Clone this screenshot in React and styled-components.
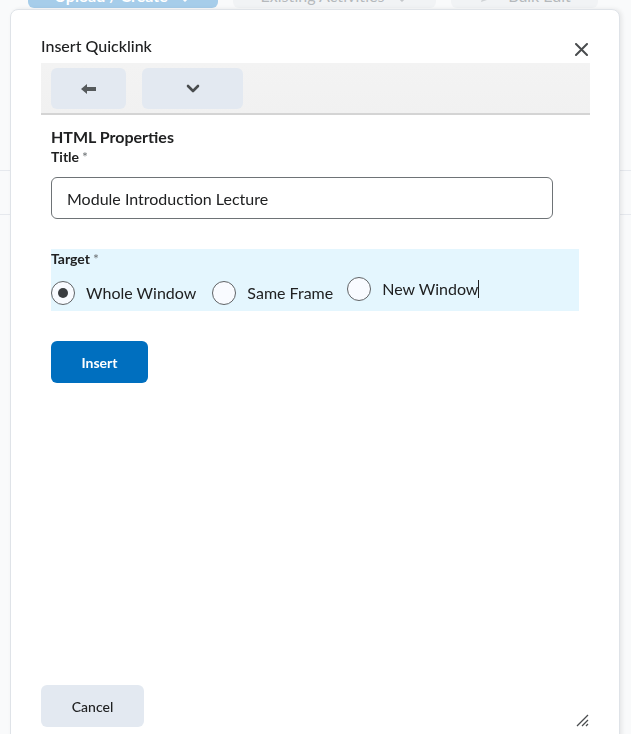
import React from 'react';
import styled, { createGlobalStyle } from 'styled-components';

const GlobalStyle = createGlobalStyle`
    html, body {
        margin: 0;
        padding: 0;
        background: #f9fafb;
        font-family: Lato, "Open Sans", sans-serif;
        color: #202122;
        overflow: hidden;
    }
`;

const Page = styled.div`
    height: 734px;
    background: #f9fafb;
`;

const TopBar = styled.div`
    display: flex;
    gap: 15px;
    padding-left: 28px;
    margin-top: -34px;
`;

const BackButton = styled.div`
    display: flex;
    align-items: flex-end;
    justify-content: center;
    gap: 10px;
    width: ${props => props.width}px;
    height: 42px;
    box-sizing: border-box;
    padding-bottom: 3px;
    border-radius: 6px;
    background: ${props => (props.primary ? '#a6cdea' : '#f1f3f5')};
    color: ${props => (props.primary ? '#ffffff' : '#b5b9bc')};
    font-size: 16px;
    font-weight: ${props => (props.primary ? 700 : 400)};
`;

const BackList = styled.div`
    margin-top: 162px;
`;

const BackRow = styled.div`
    height: 43px;
    border-top: 1px solid #e6e9ee;
`;

const Dialog = styled.div`
    position: fixed;
    top: 9px;
    left: 10px;
    width: 610px;
    height: 740px;
    box-sizing: border-box;
    background: #ffffff;
    border: 1px solid #dfe3e8;
    border-radius: 8px;
    box-shadow: 2px 0 4px rgba(0, 0, 0, 0.08);
    display: flex;
    flex-direction: column;
    padding: 0 29px 0 30px;
`;

const Header = styled.div`
    display: flex;
    align-items: center;
    justify-content: space-between;
    height: 53px;
`;

const DialogTitle = styled.div`
    font-size: 16px;
    font-weight: 500;
    margin-top: 17px;
    color: #202122;
`;

const CloseButton = styled.div`
    display: flex;
    align-items: center;
    justify-content: center;
    width: 24px;
    height: 24px;
    margin-top: 25px;
    margin-right: -3px;
`;

const Toolbar = styled.div`
    display: flex;
    gap: 16px;
    height: 52px;
    box-sizing: border-box;
    padding: 5px 10px 0;
    background: linear-gradient(#f3f3f3, #f1f1f1);
    border-bottom: 2px solid #d4d4d4;
`;

const ToolButton = styled.div`
    display: flex;
    align-items: center;
    justify-content: center;
    width: ${props => props.width}px;
    height: 41px;
    border-radius: 6px;
    background: #e3e9f1;
`;

const Form = styled.div`
    display: flex;
    flex-direction: column;
    padding: 12px 10px 0;
`;

const SectionTitle = styled.div`
    font-size: 16px;
    font-weight: 700;
    line-height: 20px;
`;

const Label = styled.div`
    font-size: 14px;
    font-weight: 700;
    line-height: 18px;
    margin-top: ${props => props.top || 0}px;
    color: #202122;

    span {
        color: #6e7376;
        font-weight: 400;
        margin-left: 3px;
    }
`;

const TextInput = styled.div`
    width: 502px;
    height: 42px;
    box-sizing: border-box;
    margin-top: 11px;
    border: 1px solid #6e7376;
    border-radius: 6px;
    display: flex;
    align-items: center;
    padding-left: 15px;
    font-size: 16px;
    color: #202122;
`;

const TargetPanel = styled.div`
    margin-top: 30px;
    width: 528px;
    height: 62px;
    box-sizing: border-box;
    background: #e4f6fe;
    padding-top: 1px;
`;

const RadioRow = styled.div`
    display: flex;
    align-items: flex-start;
    margin-top: 9px;
`;

const RadioOption = styled.div`
    display: flex;
    align-items: center;
    gap: 11px;
    margin-right: ${props => props.gap}px;
    margin-top: ${props => props.shift || 0}px;
    font-size: 16px;
    color: #202122;
    line-height: 24px;
`;

const RadioCircle = styled.div`
    width: 24px;
    height: 24px;
    box-sizing: border-box;
    border-radius: 50%;
    border: 1px solid #5f6366;
    background: #f9fbff;
    display: flex;
    align-items: center;
    justify-content: center;

    &::after {
        content: '';
        display: ${props => (props.checked ? 'block' : 'none')};
        width: 10px;
        height: 10px;
        border-radius: 50%;
        background: #3a3d40;
    }
`;

const Caret = styled.span`
    display: inline-block;
    width: 1px;
    height: 18px;
    background: #202122;
    vertical-align: -3px;
`;

const PrimaryButton = styled.div`
    margin-top: 30px;
    width: 97px;
    height: 42px;
    border-radius: 6px;
    background: #006fbf;
    color: #ffffff;
    font-size: 14px;
    font-weight: 700;
    display: flex;
    align-items: center;
    justify-content: center;
`;

const Footer = styled.div`
    margin-top: auto;
    padding-bottom: 21px;
`;

const SecondaryButton = styled.div`
    width: 103px;
    height: 42px;
    border-radius: 6px;
    background: #e3e9f1;
    color: #202122;
    font-size: 14px;
    font-weight: 500;
    display: flex;
    align-items: center;
    justify-content: center;
`;

const Grip = styled.svg`
    position: absolute;
    right: 30px;
    top: 704px;
`;

const App = () => (
    <Page>
        <GlobalStyle />
        <TopBar>
            <BackButton primary width={190}>
                Upload / Create
                <svg width="14" height="14" viewBox="0 0 14 14">
                    <path d="M2 4l5 5 5-5" fill="none" stroke="#fff" strokeWidth="3" />
                </svg>
            </BackButton>
            <BackButton width={203}>
                Existing Activities
                <svg width="14" height="14" viewBox="0 0 14 14">
                    <path d="M2 4l5 5 5-5" fill="none" stroke="#c4c7ca" strokeWidth="3" />
                </svg>
            </BackButton>
            <BackButton width={147}>
                <svg width="20" height="20" viewBox="0 0 20 20">
                    <path d="M3 17l2-6L14 2l4 4-9 9z" fill="#d0d3d6" />
                </svg>
                Bulk Edit
            </BackButton>
        </TopBar>
        <BackList>
            <BackRow />
            <BackRow />
        </BackList>

        <Dialog>
            <Header>
                <DialogTitle>Insert Quicklink</DialogTitle>
                <CloseButton>
                    <svg width="13" height="13" viewBox="0 0 13 13">
                        <path d="M1 1l11 11M12 1L1 12" stroke="#494c4e" strokeWidth="2" strokeLinecap="round" />
                    </svg>
                </CloseButton>
            </Header>
            <Toolbar>
                <ToolButton width={75}>
                    <svg width="16" height="12" viewBox="0 0 16 12">
                        <path d="M0 6L6 1v3h9v4H6v3z" fill="#565a5c" />
                    </svg>
                </ToolButton>
                <ToolButton width={101}>
                    <svg width="14" height="10" viewBox="0 0 14 10">
                        <path d="M2 2l5 5 5-5" fill="none" stroke="#494c4e" strokeWidth="2.6" strokeLinecap="round" strokeLinejoin="round" />
                    </svg>
                </ToolButton>
            </Toolbar>
            <Form>
                <SectionTitle>HTML Properties</SectionTitle>
                <Label top={1}>Title<span>*</span></Label>
                <TextInput>Module Introduction Lecture</TextInput>
                <TargetPanel>
                    <Label>Target<span>*</span></Label>
                    <RadioRow>
                        <RadioOption gap={16} shift={4}>
                            <RadioCircle checked />
                            Whole Window
                        </RadioOption>
                        <RadioOption gap={14} shift={4}>
                            <RadioCircle />
                            Same Frame
                        </RadioOption>
                        <RadioOption gap={0} shift={0}>
                            <RadioCircle />
                            <span>New Window<Caret /></span>
                        </RadioOption>
                    </RadioRow>
                </TargetPanel>
                <PrimaryButton>Insert</PrimaryButton>
            </Form>
            <Footer>
                <SecondaryButton>Cancel</SecondaryButton>
            </Footer>
            <Grip width="13" height="13" viewBox="0 0 13 13">
                <path d="M1 12L12 1M6 12l6-6M10 12l2-2" stroke="#494c4e" strokeWidth="1.3" />
            </Grip>
        </Dialog>
    </Page>
);

export default App;
